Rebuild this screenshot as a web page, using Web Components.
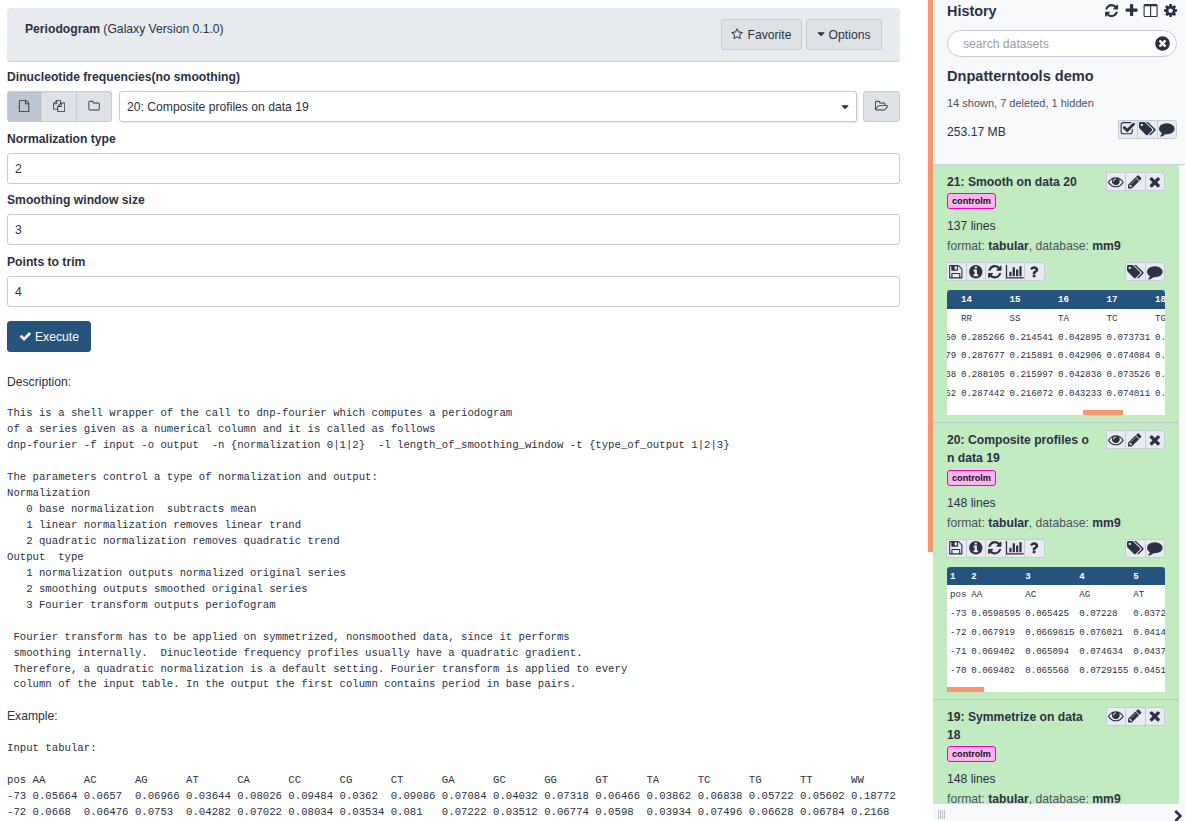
<!DOCTYPE html>
<html lang="en">
<head>
<meta charset="utf-8">
<title>Periodogram</title>
<style>
  html, body { margin: 0; height: 100%; overflow: hidden; }
  body {
    display: flex;
    background: #fff;
    color: #2c3143;
    font: 12.16px/18.24px "Liberation Sans", Arial, sans-serif;
  }
</style>
</head>
<body>
<gx-center></gx-center>
<gx-scrollbar></gx-scrollbar>
<gx-history></gx-history>

<script>
const ICONS = {
  refresh: 'M1639 1056q0 5-1 7-64 268-268 434.5t-478 166.5q-146 0-282.5-55t-243.5-157l-129 129q-19 19-45 19t-45-19-19-45v-448q0-26 19-45t45-19h448q26 0 45 19t19 45-19 45l-137 137q71 66 161 102t187 36q134 0 250-65t186-179q11-17 53-117 8-23 30-23h192q13 0 22.5 9.5t9.5 22.5zm25-800v448q0 26-19 45t-45 19h-448q-26 0-45-19t-19-45 19-45l138-138q-148-137-349-137-134 0-250 65t-186 179q-11 17-53 117-8 23-30 23h-199q-13 0-22.5-9.5t-9.5-22.5v-7q65-268 270-434.5t480-166.5q146 0 284 55.5t245 156.5l130-129q19-19 45-19t45 19 19 45z',
  plus: 'M1600 736v192q0 40-28 68t-68 28h-416v416q0 40-28 68t-68 28h-192q-40 0-68-28t-28-68v-416h-416q-40 0-68-28t-28-68v-192q0-40 28-68t68-28h416v-416q0-40 28-68t68-28h192q40 0 68 28t28 68v416h416q40 0 68 28t28 68z',
  times: 'M1490 1322q0 40-28 68l-136 136q-28 28-68 28t-68-28l-294-294-294 294q-28 28-68 28t-68-28l-136-136q-28-28-28-68t28-68l294-294-294-294q-28-28-28-68t28-68l136-136q28-28 68-28t68 28l294 294 294-294q28-28 68-28t68 28l136 136q28 28 28 68t-28 68l-294 294 294 294q28 28 28 68z',
  check: 'M1671 566q0 40-28 68l-724 724-136 136q-28 28-68 28t-68-28l-136-136-362-362q-28-28-28-68t28-68l136-136q28-28 68-28t68 28l294 295 656-657q28-28 68-28t68 28l136 136q28 28 28 68z',
  caret: 'M1408 704q0 26-19 45l-448 448q-19 19-45 19t-45-19l-448-448q-19-19-19-45t19-45 45-19h896q26 0 45 19t19 45z',
  clear: 'M1277 1122q0-26-19-45l-181-181 181-181q19-19 19-45 0-27-19-46l-90-90q-19-19-46-19-26 0-45 19l-181 181-181-181q-19-19-45-19-27 0-46 19l-90 90q-19 19-19 46 0 26 19 45l181 181-181 181q-19 19-19 45 0 27 19 46l90 90q19 19 46 19 26 0 45-19l181-181 181 181q19 19 45 19 27 0 46-19l90-90q19-19 19-46zm387-226q0 209-103 385.5t-279.5 279.5-385.5 103-385.5-103-279.5-279.5-103-385.5 103-385.5 279.5-279.5 385.5-103 385.5 103 279.5 279.5 103 385.5z',
  info: 'M1152 1376v-160q0-14-9-23t-23-9h-96v-512q0-14-9-23t-23-9h-320q-14 0-23 9t-9 23v160q0 14 9 23t23 9h96v320h-96q-14 0-23 9t-9 23v160q0 14 9 23t23 9h448q14 0 23-9t9-23zm-128-896v-160q0-14-9-23t-23-9h-192q-14 0-23 9t-9 23v160q0 14 9 23t23 9h192q14 0 23-9t9-23zm640 416q0 209-103 385.5t-279.5 279.5-385.5 103-385.5-103-279.5-279.5-103-385.5 103-385.5 279.5-279.5 385.5-103 385.5 103 279.5 279.5 103 385.5z',
  comment: 'M1792 896q0 174-120 321.5t-326 233-450 85.5q-70 0-145-8-198 175-460 242-49 14-114 22-17 2-30.5-9t-17.5-29v-1q-3-4-.5-12t2-10 4.5-9.5l6-9 7-8.5 8-9q7-8 31-34.5t34.5-38 31-39.5 32.5-51 27-59 26-76q-157-89-247.5-220t-90.5-281q0-130 71-248.5t191-204.5 286-136.5 348-50.5q244 0 450 85.5t326 233 120 321.5z',
  tags: 'M448 448q0-53-37.5-90.5t-90.5-37.5-90.5 37.5-37.5 90.5 37.5 90.5 90.5 37.5 90.5-37.5 37.5-90.5zm1067 576q0 53-37 90l-491 492q-39 37-91 37-53 0-90-37l-715-716q-38-37-64.5-101t-26.5-117v-416q0-52 38-90t90-38h416q53 0 117 26.5t102 64.5l715 714q37 39 37 91zm384 0q0 53-37 90l-491 492q-39 37-91 37-36 0-59-14t-53-45l470-470q37-37 37-90 0-52-37-91l-715-714q-38-38-102-64.5t-117-26.5h224q53 0 117 26.5t102 64.5l715 714q37 39 37 91z',
  eye: 'M1664 960q-152-236-381-353 61 104 61 225 0 185-131.5 316.5t-316.5 131.5-316.5-131.5-131.5-316.5q0-121 61-225-229 117-381 353 133 205 333.5 326.5t434.5 121.5 434.5-121.5 333.5-326.5zm-720-384q0-20-14-34t-34-14q-125 0-214.5 89.5t-89.5 214.5q0 20 14 34t34 14 34-14 14-34q0-86 61-147t147-61q20 0 34-14t14-34zm848 384q0 34-20 69-140 230-376.5 368.5t-499.5 138.5-499.5-139-376.5-368q-20-35-20-69t20-69q140-229 376.5-368t499.5-139 499.5 139 376.5 368q20 35 20 69z',
  pencil: 'M491 1536l91-91-235-235-91 91v107h128v128h107zm523-928q0-22-22-22-10 0-17 7l-542 542q-7 7-7 17 0 22 22 22 10 0 17-7l542-542q7-7 7-17zm-54-192l416 416-832 832h-416v-416zm683 96q0 53-37 90l-166 166-416-416 166-165q36-38 90-38 53 0 91 38l235 234q37 39 37 91z',
  cog: 'M1152 896q0-106-75-181t-181-75-181 75-75 181 75 181 181 75 181-75 75-181zm512-109v222q0 12-8 23t-20 13l-185 28q-19 54-39 91 35 50 107 138 10 12 10 25t-9 23q-27 37-99 108t-94 71q-12 0-26-9l-138-108q-44 23-91 38-16 136-29 186-7 28-36 28h-222q-14 0-24.5-8.5t-11.5-21.5l-28-184q-49-16-90-37l-141 107q-10 9-25 9-14 0-25-11-126-114-165-168-7-10-7-23 0-12 8-23 15-21 51-66.5t54-70.5q-27-50-41-99l-183-27q-13-2-21-12.5t-8-23.5v-222q0-12 8-23t19-13l186-28q14-46 39-92-40-57-107-138-10-12-10-24 0-10 9-23 26-36 98.5-107.5t94.5-71.5q13 0 26 10l138 107q44-23 91-38 16-136 29-186 7-28 36-28h222q14 0 24.5 8.5t11.5 21.5l28 184q49 16 90 37l142-107q9-9 24-9 13 0 25 10 129 119 165 170 7 8 7 22 0 12-8 23-15 21-51 66.5t-54 70.5q26 50 41 98l183 28q13 2 21 12.5t8 23.5z',
  question: 'M1088 1256v240q0 16-12 28t-28 12h-240q-16 0-28-12t-12-28v-240q0-16 12-28t28-12h240q16 0 28 12t12 28zm316-600q0 54-15.5 101t-35 76.5-55 59.5-57.5 43.5-61 35.5q-41 23-68.5 65t-27.5 67q0 17-12 32.5t-28 15.5h-240q-15 0-25.5-18.5t-10.5-37.5v-45q0-83 65-156.5t143-108.5q59-27 84-56t25-76q0-42-46.5-74t-107.5-32q-65 0-108 29-35 25-107 115-13 16-31 16-12 0-25-8l-164-125q-13-10-15.5-25t5.5-28q160-266 464-266 80 0 161 31t146 83 106 127.5 41 158.5z',
  chart: 'M640 896v512h-256v-512h256zm384-512v1024h-256v-1024h256zm1024 1152v128h-2048v-1536h128v1408h1920zm-640-896v768h-256v-768h256zm384-384v1152h-256v-1152h256z',
  save: 'M512 1536h768v-384h-768v384zm896 0h128v-896q0-14-10-38.5t-20-34.5l-281-281q-10-10-34-20t-39-10v416q0 40-28 68t-68 28h-576q-40 0-68-28t-28-68v-416h-128v1280h128v-416q0-40 28-68t68-28h832q40 0 68 28t28 68v416zm-384-928v-320q0-13-9.5-22.5t-22.5-9.5h-192q-13 0-22.5 9.5t-9.5 22.5v320q0 13 9.5 22.5t22.5 9.5h192q13 0 22.5-9.5t9.5-22.5zm640 32v928q0 40-28 68t-68 28h-1344q-40 0-68-28t-28-68v-1344q0-40 28-68t68-28h928q40 0 88 20t76 48l280 280q28 28 48 76t20 88z',
  file: 'M1596 380q28 28 48 76t20 88v1152q0 40-28 68t-68 28h-1344q-40 0-68-28t-28-68v-1600q0-40 28-68t68-28h896q40 0 88 20t76 48zm-444-244v376h376q-10-29-22-41l-313-313q-12-12-41-22zm384 1528v-1024h-416q-40 0-68-28t-28-68v-416h-768v1536h1280z',
  files: 'M1696 384q40 0 68 28t28 68v1216q0 40-28 68t-68 28h-960q-40 0-68-28t-28-68v-288h-544q-40 0-68-28t-28-68v-672q0-40 20-88t48-76l408-408q28-28 76-48t88-20h416q40 0 68 28t28 68v328q68-40 128-40h416zm-544 213l-299 299h299v-299zm-640-384l-299 299h299v-299zm196 647l316-316v-416h-384v416q0 40-28 68t-68 28h-416v640h512v-256q0-40 20-88t48-76zm956 804v-1152h-384v416q0 40-28 68t-68 28h-416v640h896z',
  folder: 'M1600 1312v-704q0-40-28-68t-68-28h-704q-40 0-68-28t-28-68v-64q0-40-28-68t-68-28h-320q-40 0-68 28t-28 68v960q0 40 28 68t68 28h1216q40 0 68-28t28-68zm128-704v704q0 92-66 158t-158 66h-1216q-92 0-158-66t-66-158v-960q0-92 66-158t158-66h320q92 0 158 66t66 158v32h672q92 0 158 66t66 158z',
  open: 'M1781 931q0-35-53-35h-1088q-40 0-85.5 21.5t-71.5 52.5l-294 363q-18 24-18 40 0 35 53 35h1088q40 0 86-22t71-53l294-363q18-22 18-39zm-1141-163h768v-160q0-40-28-68t-68-28h-576q-40 0-68-28t-28-68v-64q0-40-28-68t-68-28h-320q-40 0-68 28t-28 68v853l256-315q44-53 116-87.5t140-34.5zm1269 163q0 62-46 120l-295 363q-43 53-116 87.5t-140 34.5h-1088q-92 0-158-66t-66-158v-960q0-92 66-158t158-66h320q92 0 158 66t66 158v32h544q92 0 158 66t66 158v160h192q54 0 99 24.5t67 70.5q15 32 15 68z',
  star: 'M1201 1004l306-297-422-62-189-382-189 382-422 62 306 297-73 421 378-199 377 199zm527-357q0 22-26 48l-363 354 86 500q1 7 1 20 0 50-41 50-19 0-40-12l-449-236-449 236q-22 12-40 12-21 0-31.5-14.5t-10.5-35.5q0-6 2-20l86-500-364-354q-25-27-25-48 0-37 56-46l502-73 225-455q19-41 49-41t49 41l225 455 502 73q56 9 56 46z',
  checkbox: 'M1472 930v318q0 119-84.5 203.5t-203.5 84.5h-832q-119 0-203.5-84.5t-84.5-203.5v-832q0-119 84.5-203.5t203.5-84.5h832q63 0 117 25 15 7 18 23 3 17-9 29l-49 49q-10 10-23 10-3 0-9-2-23-6-45-6h-832q-66 0-113 47t-47 113v832q0 66 47 113t113 47h832q66 0 113-47t47-113v-254q0-13 9-22l64-64q10-10 23-10 6 0 12 3 20 8 20 29zm231-489l-814 814q-24 24-57 24t-57-24l-430-430q-24-24-24-57t24-57l110-110q24-24 57-24t57 24l263 263 647-647q24-24 57-24t57 24l110 110q24 24 24 57t-24 57z',
  columns: 'M224 1536h608v-1152h-640v1120q0 13 9.5 22.5t22.5 9.5zm1376-32v-1120h-640v1152h608q13 0 22.5-9.5t9.5-22.5zm128-1216v1216q0 66-47 113t-113 47h-1344q-66 0-113-47t-47-113v-1216q0-66 47-113t113-47h1344q66 0 113 47t47 113z',
  chevron: 'M1363 877l-742 742q-19 19-45 19t-45-19l-166-166q-19-19-19-45t19-45l531-531-531-531q-19-19-19-45t19-45l166-166q19-19 45-19t45 19l742 742q19 19 19 45t-19 45z'
}

const WIDE = { tags: 1920, open: 1920, chart: 2048 }

class GxIcon extends HTMLElement {
  constructor () {
    super()
    this.attachShadow({ mode: 'open' })
  }

  connectedCallback () {
    const name = this.getAttribute('name')
    const size = this.getAttribute('size') || 12
    const box = WIDE[name] || 1792
    const width = size * box / 1792
    this.shadowRoot.innerHTML = `
      <style>
        :host { display: inline-flex; }
        svg { display: block; fill: currentColor; }
      </style>
      <svg width="${width}" height="${size}" viewBox="0 0 ${box} 1792"><path d="${ICONS[name]}"/></svg>
    `
  }
}

class GxIconGroup extends HTMLElement {
  constructor () {
    super()
    this.attachShadow({ mode: 'open' })
  }

  connectedCallback () {
    const names = this.getAttribute('names').split(' ')
    const buttons = names.map((name) => `<span class="btn"><gx-icon name="${name}" size="15.6"></gx-icon></span>`).join('')
    this.shadowRoot.innerHTML = `
      <style>
        :host { display: inline-flex; flex: none; }
        .btn {
          width: 20.5px;
          height: 19px;
          box-sizing: border-box;
          display: flex;
          align-items: center;
          justify-content: center;
          overflow: hidden;
          background: #e8ebef;
          border: 1px solid #c5ccd8;
          margin-left: -1px;
        }
        .btn:first-child { border-radius: 3px 0 0 3px; margin-left: 0; }
        .btn:last-child { border-radius: 0 3px 3px 0; }
      </style>
      ${buttons}
    `
  }
}

class GxButton extends HTMLElement {
  constructor () {
    super()
    this.attachShadow({ mode: 'open' })
  }

  connectedCallback () {
    this.shadowRoot.innerHTML = `
      <style>
        :host {
          display: inline-flex;
          align-items: center;
          gap: 4px;
          height: 31px;
          box-sizing: border-box;
          padding: 1px 10px 0;
          background: #dee2e6;
          border: 1px solid #c6cbd6;
          border-radius: 3px;
          color: #2c3143;
        }
        :host([primary]) {
          gap: 3.3px;
          padding: 1px 11px 0 11px;
          background: #25537b;
          border-color: #25537b;
          color: #fff;
        }
        gx-icon { margin-top: -1px; }
        gx-icon[name="caret"] { margin-left: -2.5px; margin-right: -2.5px; }
      </style>
      <gx-icon name="${this.getAttribute('icon')}" size="${this.getAttribute('size') || 12.16}"></gx-icon>
      <slot></slot>
    `
  }
}

class GxToolHeader extends HTMLElement {
  constructor () {
    super()
    this.attachShadow({ mode: 'open' })
  }

  connectedCallback () {
    this.shadowRoot.innerHTML = `
      <style>
        :host {
          display: flex;
          justify-content: space-between;
          align-items: flex-start;
          height: 54px;
          box-sizing: border-box;
          padding: 11px 18px 0 18px;
          background: #e7eaee;
          border-bottom: 1px solid #c9ced8;
          border-radius: 4px;
          margin-bottom: 5.5px;
        }
        .title { margin-top: 1px; }
        b { font-weight: 700; }
        .buttons { display: flex; gap: 4px; }
        gx-button[icon="star"] { padding: 1px 9.5px 0; }
        gx-button[icon="caret"] { padding: 1px 10.5px 0; }
      </style>
      <div class="title"><b>Periodogram</b> (Galaxy Version 0.1.0)</div>
      <div class="buttons">
        <gx-button icon="star">Favorite</gx-button>
        <gx-button icon="caret">Options</gx-button>
      </div>
    `
  }
}

class GxField extends HTMLElement {
  constructor () {
    super()
    this.attachShadow({ mode: 'open' })
  }

  connectedCallback () {
    this.shadowRoot.innerHTML = `
      <style>
        :host { display: block; margin-bottom: 7.3px; }
        .label { font-weight: 700; margin-bottom: 5px; }
        .box {
          height: 31px;
          box-sizing: border-box;
          display: flex;
          align-items: center;
          padding: 1px 7px 0;
          background: #fff;
          border: 1px solid #c6cbd6;
          border-radius: 3px;
        }
      </style>
      <div class="label">${this.getAttribute('label')}</div>
      <div class="box"><slot></slot></div>
    `
  }
}

class GxDataField extends HTMLElement {
  constructor () {
    super()
    this.attachShadow({ mode: 'open' })
  }

  connectedCallback () {
    this.shadowRoot.innerHTML = `
      <style>
        :host { display: block; margin-bottom: 7.8px; }
        .label { font-weight: 700; margin-bottom: 5px; }
        .row { display: flex; height: 31px; }
        .modes { display: flex; margin-right: 7px; }
        .mode {
          width: 35px;
          box-sizing: border-box;
          display: flex;
          align-items: center;
          justify-content: center;
          background: #dee2e6;
          border: 1px solid #c6cbd6;
          border-left: 0;
        }
        .mode:first-child { border-left: 1px solid #c6cbd6; border-radius: 3px 0 0 3px; background: #bdc6d0; }
        .mode:last-child { border-radius: 0 3px 3px 0; }
        .select {
          flex: 1;
          display: flex;
          align-items: center;
          justify-content: space-between;
          box-sizing: border-box;
          padding: 1px 5px 0 7px;
          background: #fff;
          border: 1px solid #c6cbd6;
          border-radius: 3px;
          box-shadow: 1px 1px 2px rgba(0, 0, 0, .12);
        }
        .browse {
          width: 37px;
          margin-left: 6px;
          box-sizing: border-box;
          display: flex;
          align-items: center;
          justify-content: center;
          background: #dee2e6;
          border: 1px solid #c6cbd6;
          border-radius: 3px;
        }
      </style>
      <div class="label">${this.getAttribute('label')}</div>
      <div class="row">
        <div class="modes">
          <span class="mode"><gx-icon name="file" size="12.16"></gx-icon></span>
          <span class="mode"><gx-icon name="files" size="12.16"></gx-icon></span>
          <span class="mode"><gx-icon name="folder" size="12.16"></gx-icon></span>
        </div>
        <div class="select">
          <span><slot></slot></span>
          <gx-icon name="caret" size="12.16"></gx-icon>
        </div>
        <span class="browse"><gx-icon name="open" size="12.16"></gx-icon></span>
      </div>
    `
  }
}

class GxHelp extends HTMLElement {
  constructor () {
    super()
    this.attachShadow({ mode: 'open' })
  }

  connectedCallback () {
    const description = `This is a shell wrapper of the call to dnp-fourier which computes a periodogram
of a series given as a numerical column and it is called as follows
dnp-fourier -f input -o output  -n {normalization 0|1|2}  -l length_of_smoothing_window -t {type_of_output 1|2|3}

The parameters control a type of normalization and output:
Normalization
   0 base normalization  subtracts mean
   1 linear normalization removes linear trand
   2 quadratic normalization removes quadratic trend
Output  type
   1 normalization outputs normalized original series
   2 smoothing outputs smoothed original series
   3 Fourier transform outputs periofogram

 Fourier transform has to be applied on symmetrized, nonsmoothed data, since it performs
 smoothing internally.  Dinucleotide frequency profiles usually have a quadratic gradient.
 Therefore, a quadratic normalization is a default setting. Fourier transform is applied to every
 column of the input table. In the output the first column contains period in base pairs.`
    const example = `Input tabular:

pos AA      AC      AG      AT      CA      CC      CG      CT      GA      GC      GG      GT      TA      TC      TG      TT      WW
-73 0.05664 0.0657  0.06966 0.03644 0.08026 0.09484 0.0362  0.09086 0.07084 0.04032 0.07318 0.06466 0.03862 0.06838 0.05722 0.05602 0.18772
-72 0.0668  0.06476 0.0753  0.04282 0.07022 0.08034 0.03534 0.081   0.07222 0.03512 0.06774 0.0598  0.03934 0.07496 0.06628 0.06784 0.2168`
    this.shadowRoot.innerHTML = `
      <style>
        :host { display: block; margin-top: 21px; }
        p { margin: 0 0 15.2px; }
        pre {
          margin: 0 0 14px;
          font: 10.67px/15.96px "Liberation Mono", "Courier New", monospace;
        }
      </style>
      <p>Description:</p>
      <pre>${description}</pre>
      <p>Example:</p>
      <pre>${example}</pre>
    `
  }
}

class GxCenter extends HTMLElement {
  constructor () {
    super()
    this.attachShadow({ mode: 'open' })
  }

  connectedCallback () {
    this.shadowRoot.innerHTML = `
      <style>
        :host {
          display: block;
          flex: none;
          width: 928px;
          height: 821px;
          box-sizing: border-box;
          padding: 8px 28px 0 7px;
          overflow: hidden;
        }
        .run { margin-top: 14px; display: flex; }
      </style>
      <gx-tool-header></gx-tool-header>
      <gx-data-field label="Dinucleotide frequencies(no smoothing)">20: Composite profiles on data 19</gx-data-field>
      <gx-field label="Normalization type">2</gx-field>
      <gx-field label="Smoothing window size">3</gx-field>
      <gx-field label="Points to trim">4</gx-field>
      <div class="run"><gx-button primary icon="check" size="12.7">Execute</gx-button></div>
      <gx-help></gx-help>
    `
  }
}

class GxScrollbar extends HTMLElement {
  constructor () {
    super()
    this.attachShadow({ mode: 'open' })
  }

  connectedCallback () {
    this.shadowRoot.innerHTML = `
      <style>
        :host { display: block; flex: none; width: 5px; height: 821px; }
        .thumb { height: 552px; background: #f9966b; }
      </style>
      <div class="thumb"></div>
    `
  }
}

class GxPeek extends HTMLElement {
  constructor () {
    super()
    this.attachShadow({ mode: 'open' })
  }

  set data (peek) {
    const head = peek.head.map((cell) => `<th>${cell}</th>`).join('')
    const rows = peek.rows.map((row) => `<tr>${row.map((cell) => `<td>${cell}</td>`).join('')}</tr>`).join('')
    this.shadowRoot.innerHTML = `
      <style>
        :host {
          display: block;
          position: relative;
          height: 125px;
          margin-top: 9px;
          overflow: hidden;
          background: #fff;
          border-radius: 3px 3px 0 0;
        }
        .head { position: absolute; left: 0; right: 0; top: 0; height: 18.8px; background: #25537b; }
        table {
          position: relative;
          border-collapse: collapse;
          margin-left: ${peek.offset}px;
          font: 9.12px "Liberation Mono", "Courier New", monospace;
          white-space: pre;
        }
        th, td { height: 18.8px; padding: 0 1.8px 0 3px; text-align: left; }
        th { color: #fff; font-weight: 700; }
        td { color: #2c3143; }
        .thumb {
          position: absolute;
          bottom: 0;
          left: ${peek.thumb[0]}px;
          width: ${peek.thumb[1]}px;
          height: 5px;
          background: #f9966b;
        }
      </style>
      <div class="head"></div>
      <table>
        <tr>${head}</tr>
        ${rows}
      </table>
      <div class="thumb"></div>
    `
  }
}

class GxDataset extends HTMLElement {
  constructor () {
    super()
    this.attachShadow({ mode: 'open' })
  }

  set data (item) {
    this.shadowRoot.innerHTML = `
      <style>
        :host {
          display: block;
          box-sizing: border-box;
          padding: 8px 14px 7px;
          background: #c2ebc2;
          border-bottom: 1px solid #bdc6d0;
        }
        .head { display: flex; justify-content: space-between; align-items: flex-start; }
        .title { width: 144px; font-weight: 700; word-break: break-all; }
        .tag {
          display: block;
          width: fit-content;
          height: 16px;
          box-sizing: border-box;
          margin-top: 2px;
          padding: 0 4px;
          background: #ffb3f1;
          border: 1px solid #f000b8;
          border-radius: 3px;
          color: #111;
          font-size: 9.12px;
          line-height: 14px;
          font-weight: 700;
        }
        gx-icon-group { margin-top: -1px; }
        .summary { margin-top: 8px; }
        .meta { margin-top: 2px; color: #4b5263; }
        .meta b { color: #2c3143; }
        .actions { display: flex; justify-content: space-between; margin-top: 6.5px; }
        .actions gx-icon-group { margin-top: 0; }
      </style>
      <div class="head">
        <div>
          <div class="title">${item.title}</div>
          <span class="tag">${item.tag}</span>
        </div>
        <gx-icon-group names="eye pencil times"></gx-icon-group>
      </div>
      <div class="summary">${item.lines}</div>
      <div class="meta">format: <b>tabular</b>, database: <b>mm9</b></div>
      <div class="actions">
        <gx-icon-group names="save info refresh chart question"></gx-icon-group>
        <gx-icon-group names="tags comment"></gx-icon-group>
      </div>
      <gx-peek></gx-peek>
    `
    this.shadowRoot.querySelector('gx-peek').data = item.peek
  }
}

class GxHistory extends HTMLElement {
  constructor () {
    super()
    this.attachShadow({ mode: 'open' })
  }

  connectedCallback () {
    this.loadData()
    this.render()
  }

  loadData () {
    this.data = [
      {
        title: '21: Smooth on data 20',
        tag: 'controlm',
        lines: '137 lines',
        peek: {
          offset: -37.6,
          thumb: [136, 40],
          head: ['13', '14', '15', '16', '17', '18'],
          rows: [
            ['WW', 'RR', 'SS', 'TA', 'TC', 'TG'],
            ['0.182160', '0.285266', '0.214541', '0.042895', '0.073731', '0.0'],
            ['0.184379', '0.287677', '0.215891', '0.042906', '0.074084', '0.0'],
            ['0.183638', '0.288105', '0.215997', '0.042838', '0.073526', '0.0'],
            ['0.184362', '0.287442', '0.216072', '0.043233', '0.074011', '0.0']
          ]
        }
      },
      {
        title: '20: Composite profiles on data 19',
        tag: 'controlm',
        lines: '148 lines',
        peek: {
          offset: 0,
          thumb: [0, 37],
          head: ['1', '2', '3', '4', '5'],
          rows: [
            ['pos', 'AA', 'AC', 'AG', 'AT'],
            ['-73', '0.0598595', '0.065425', '0.07228', '0.03722'],
            ['-72', '0.067919', '0.0669815', '0.076021', '0.04142'],
            ['-71', '0.069402', '0.065094', '0.074634', '0.04376'],
            ['-70', '0.069402', '0.065568', '0.0729155', '0.04512']
          ]
        }
      },
      {
        title: '19: Symmetrize on data 18',
        tag: 'controlm',
        lines: '148 lines',
        peek: {
          offset: 0,
          thumb: [0, 37],
          head: ['1', '2', '3', '4', '5'],
          rows: []
        }
      }
    ]
  }

  render () {
    this.shadowRoot.innerHTML = `
      <style>
        :host {
          display: flex;
          flex-direction: column;
          flex: none;
          width: 252px;
          height: 821px;
          background: #f8f9fa;
        }
        .top {
          height: 165px;
          flex: none;
          box-sizing: border-box;
          padding: 2px 8px 0 14px;
          border-bottom: 1px solid #c9ced8;
        }
        .bar { display: flex; justify-content: space-between; align-items: center; height: 18px; }
        h2 { margin: 0; font-size: 14.4px; line-height: 18px; font-weight: 700; }
        .tools { display: flex; align-items: center; gap: 4.3px; margin-right: -1px; }
        .search {
          display: flex;
          align-items: center;
          justify-content: space-between;
          height: 27px;
          box-sizing: border-box;
          margin-top: 10px;
          padding: 1px 5px 0 15px;
          background: #fff;
          border: 1px solid #c6cbd6;
          border-radius: 14px;
          color: #9a9fac;
        }
        .search gx-icon { color: #2c3143; margin-top: -1px; }
        h3 { margin: 10px 0 0; font-size: 14.6px; line-height: 18px; font-weight: 700; }
        .counts { margin-top: 9px; font-size: 11px; line-height: 18px; color: #4b5263; }
        .size { display: flex; justify-content: space-between; align-items: flex-start; margin-top: 7.5px; }
        .size span { margin-top: 3.5px; }
        .list { flex: 1; min-height: 0; overflow: hidden; padding-right: 6px; }
        .foot {
          flex: none;
          height: 17px;
          display: flex;
          justify-content: space-between;
          overflow: hidden;
          padding: 6px 0 0 5px;
          box-sizing: border-box;
        }
        .grip {
          width: 7px;
          height: 9px;
          background: repeating-linear-gradient(90deg, #c3c7cf 0 1px, #eceef1 1px 2px);
        }
      </style>
      <div class="top">
        <div class="bar">
          <h2>History</h2>
          <div class="tools">
            <gx-icon name="refresh" size="15.2"></gx-icon>
            <gx-icon name="plus" size="15.2"></gx-icon>
            <gx-icon name="columns" size="15.2"></gx-icon>
            <gx-icon name="cog" size="15.2"></gx-icon>
          </div>
        </div>
        <div class="search">
          <span>search datasets</span>
          <gx-icon name="clear" size="17"></gx-icon>
        </div>
        <h3>Dnpatterntools demo</h3>
        <div class="counts">14 shown, 7 deleted, 1 hidden</div>
        <div class="size">
          <span>253.17 MB</span>
          <gx-icon-group names="checkbox tags comment"></gx-icon-group>
        </div>
      </div>
      <div class="list"></div>
      <div class="foot">
        <span class="grip"></span>
        <gx-icon name="chevron" size="13"></gx-icon>
      </div>
    `
    const list = this.shadowRoot.querySelector('.list')
    this.data.forEach((item) => {
      const dataset = document.createElement('gx-dataset')
      list.appendChild(dataset)
      dataset.data = item
    })
  }
}

customElements.define('gx-icon', GxIcon)
customElements.define('gx-icon-group', GxIconGroup)
customElements.define('gx-button', GxButton)
customElements.define('gx-tool-header', GxToolHeader)
customElements.define('gx-field', GxField)
customElements.define('gx-data-field', GxDataField)
customElements.define('gx-help', GxHelp)
customElements.define('gx-center', GxCenter)
customElements.define('gx-scrollbar', GxScrollbar)
customElements.define('gx-peek', GxPeek)
customElements.define('gx-dataset', GxDataset)
customElements.define('gx-history', GxHistory)
</script>
</body>
</html>
